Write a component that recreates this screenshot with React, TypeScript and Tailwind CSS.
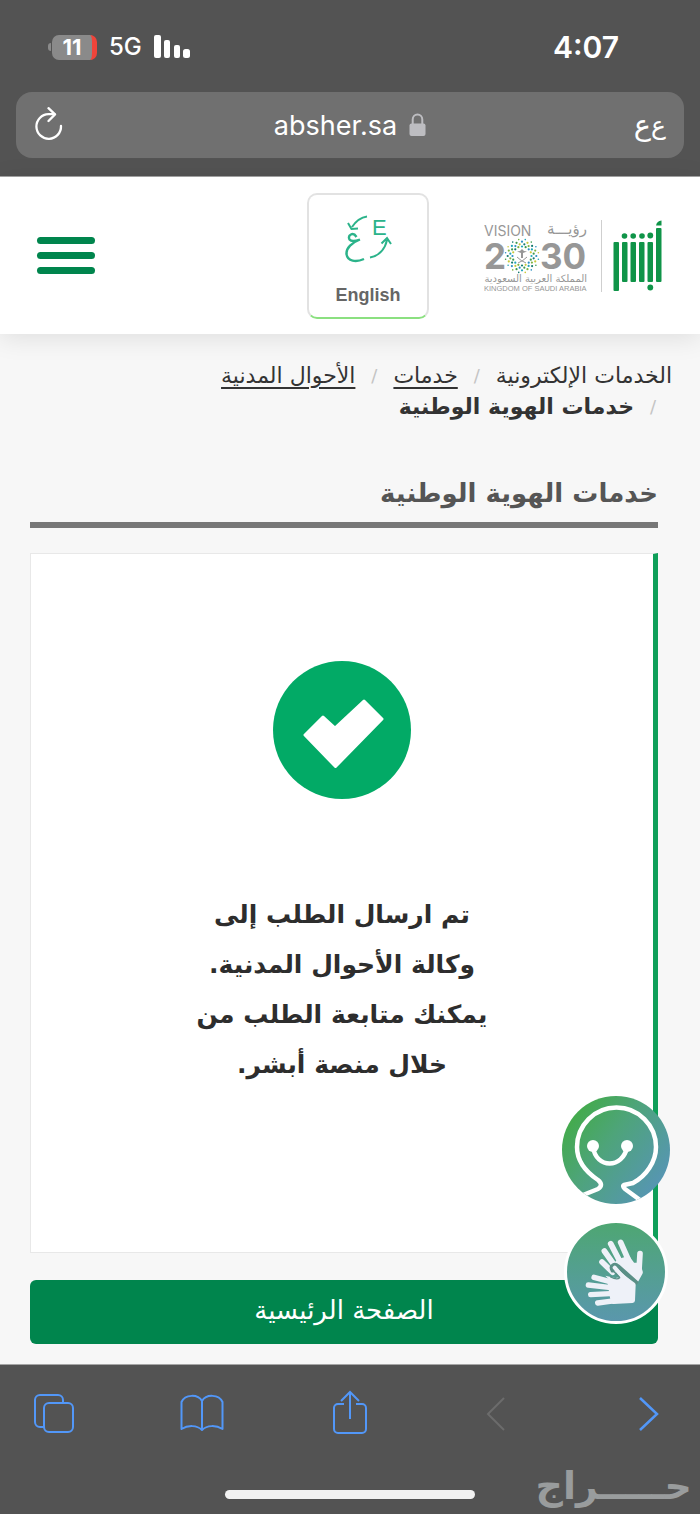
import React from "react";

const RING_COLORS = ["#1fa5b8", "#7cb342", "#157a6e", "#c9c93a", "#2a8fc4", "#3f9b4f"];

const ringDots = [0, 1, 2, 3].flatMap((ring) =>
  Array.from({ length: 16 }, (_, i) => {
    const angle = ((i + (ring % 2) * 0.5) / 16) * Math.PI * 2;
    const radius = 9.5 + ring * 2.4;
    return {
      key: `${ring}-${i}`,
      x: 38 + Math.cos(angle) * radius,
      y: 36 + Math.sin(angle) * radius,
      r: ring === 3 ? 0.8 : 1.1,
      color: RING_COLORS[(i * 5 + ring * 2) % RING_COLORS.length],
    };
  }),
);

function SignalBars() {
  return (
    <svg width="36" height="24" viewBox="0 0 36 24" fill="#fff" aria-hidden="true">
      <rect x="0" y="0" width="7" height="23" rx="2" />
      <rect x="10" y="5" width="6" height="18" rx="2" />
      <rect x="20" y="10" width="6" height="13" rx="2" />
      <rect x="29" y="14" width="7" height="9" rx="2.5" />
    </svg>
  );
}

function Battery() {
  return (
    <div className="flex items-center gap-px">
      <span className="h-2 w-[3px] rounded-l-full bg-[#8a8a8a]" />
      <span className="flex h-[25px] w-[45px] items-center justify-center overflow-hidden rounded-[7px] border-r-[5px] border-[#f0443a] bg-[#8a8a8a] text-[22px] font-bold leading-none">
        11
      </span>
    </div>
  );
}

function BrowserTop() {
  return (
    <div dir="ltr" className="h-[177px] border-b border-[#a5a5a5] bg-[#535353] px-4 pt-7 text-white font-[Inter,sans-serif]">
      <div className="flex h-[38px] items-center justify-between pl-8 pr-[65px]">
        <div className="flex items-center">
          <Battery />
          <span className="ml-3 mr-3 text-[24px] font-medium leading-none">5G</span>
          <SignalBars />
        </div>
        <time className="text-[30px] font-semibold leading-none">4:07</time>
      </div>
      <div className="mt-[26px] flex h-[66px] items-center justify-between rounded-[16px] bg-[#707070] px-[18px]">
        <button type="button" aria-label="إعادة تحميل" className="flex w-10">
          <svg width="30" height="36" viewBox="0 0 30 36" fill="none" stroke="#fff" strokeWidth="2.3" strokeLinecap="round" strokeLinejoin="round">
            <path d="M20.5 7.200 H14.5 A12.3 12.3 0 1 0 27 19" />
            <path d="M14.5 1.200 L21 7.400 L14.5 14" />
          </svg>
        </button>
        <div className="flex items-center gap-3">
          <span className="text-[27px] leading-none">absher.sa</span>
          <svg width="17" height="24" viewBox="0 0 17 24" aria-hidden="true">
            <path d="M3.7 11 V6.5 a4.8 5 0 0 1 9.6 0 V11" fill="none" stroke="#bdbdc1" strokeWidth="2" />
            <rect x="0.5" y="10.5" width="16" height="12.5" rx="2" fill="#bdbdc1" />
          </svg>
        </div>
        <button type="button" dir="rtl" className="flex w-10 items-center justify-start font-['DejaVu_Sans',sans-serif] leading-none">
          <span className="text-[25px]">ع</span>
          <span className="text-[29px]">ع</span>
        </button>
      </div>
    </div>
  );
}

function AbsherLogo() {
  return (
    <svg width="50" height="72" viewBox="0 0 50 72" role="img" aria-label="أبشر" fill="#0f9448">
      <rect x="0.5" y="22" width="5.5" height="49" rx="1" />
      <rect x="9" y="22" width="5.5" height="40" rx="1" />
      <rect x="17.5" y="22" width="5.5" height="40" rx="1" />
      <rect x="26" y="22" width="5.5" height="40" rx="1" />
      <rect x="34.5" y="22" width="5.5" height="40" rx="1" />
      <rect x="43" y="8" width="5.5" height="54" rx="1" />
      <circle cx="11.5" cy="16" r="2.8" />
      <circle cx="20.2" cy="16" r="2.8" />
      <circle cx="29" cy="16" r="2.8" />
      <circle cx="37.3" cy="15.5" r="2.9" />
      <circle cx="37.3" cy="67.5" r="2.9" />
      <path d="M43 5.5 C43.5 2.5 45.5 1 48.5 0.5 V5.5 Z" />
    </svg>
  );
}

function VisionLogo() {
  return (
    <svg width="104" height="72" viewBox="0 0 104 72" direction="ltr" fill="#979797">
      <text x="0" y="16" fontFamily="Inter, sans-serif" fontSize="14">VISION</text>
      <text x="103" y="14" textAnchor="end" fontFamily="DejaVu Sans, sans-serif" fontSize="15">رؤيـــة</text>
      <text x="0" y="49" fontFamily="Inter, sans-serif" fontSize="35" fontWeight="700">2</text>
      <text x="56" y="49" fontFamily="Inter, sans-serif" fontSize="35" fontWeight="700">30</text>
      <circle cx="38" cy="36" r="17" fill="#fff" />
      {ringDots.map((d) => (
        <circle key={d.key} cx={d.x} cy={d.y} r={d.r} fill={d.color} />
      ))}
      <path d="M38 29 l2 2 3 .5 -4 1.5 v5 h-2 v-5 l-4-1.5 3-.5 Z" />
      <path d="M33 37 q4 4 9 6 M43 37 q-4 4-9 6" fill="none" stroke="#979797" strokeWidth="1" />
      <text x="103" y="62" textAnchor="end" fontFamily="DejaVu Sans, sans-serif" fontSize="10">المملكة العربية السعودية</text>
      <text x="0" y="71" fontFamily="Liberation Sans, sans-serif" fontSize="7.5">KINGDOM OF SAUDI ARABIA</text>
    </svg>
  );
}

function LanguageIcon() {
  return (
    <svg width="52" height="50" viewBox="0 0 52 50" fill="none" stroke="#2bb38a" direction="ltr" aria-hidden="true">
      <path d="M25 1.5 C18 2.5 14 6 10 12 M6 8 L9.5 14 L16 13.5" strokeWidth="2" />
      <path d="M14.5 22 C11 16.5 5.5 20 7.5 24.5 C9.5 27 14 26 18 24.5 C10 27.5 4 33 4.5 39 C5.5 46.500 14 47.5 22 44" strokeWidth="2.4" />
      <path d="M28 42.5 C37 41 43 34 45 25 M39.500 28.500 L45 23 L49 29" strokeWidth="2" />
      <text x="30" y="20" fill="#2bb38a" stroke="none" fontFamily="Liberation Sans, sans-serif" fontSize="22">E</text>
    </svg>
  );
}

function SiteHeader() {
  return (
    <header className="relative flex h-[157px] items-center justify-between bg-white pl-[37px] pr-[37px] shadow-[0_4px_24px_rgba(0,0,0,0.1)]">
      <div className="flex items-center">
        <AbsherLogo />
        <span className="ml-[13px] mr-[11px] h-[72px] w-px bg-[#cfcfcf]" />
        <VisionLogo />
        <button
          type="button"
          className="mr-[55px] flex h-[126px] w-[122px] flex-col items-center justify-end gap-5 rounded-[10px] border-2 border-[#e2e2e2] border-b-[#8be080] bg-white pb-3"
        >
          <LanguageIcon />
          <span className="font-['Liberation_Sans',sans-serif] text-[18px] font-bold leading-5 text-[#666]">English</span>
        </button>
      </div>
      <button type="button" aria-label="القائمة" className="flex w-[58px] flex-col gap-2">
        <span className="h-[7px] rounded-full bg-[#00854d]" />
        <span className="h-[7px] rounded-full bg-[#00854d]" />
        <span className="h-[7px] rounded-full bg-[#00854d]" />
      </button>
    </header>
  );
}

function Separator() {
  return <span aria-hidden="true" className="w-[38px] shrink-0 text-center text-[18px] font-normal text-[#c4c4c4]">/</span>;
}

function Breadcrumb() {
  return (
    <nav className="px-7 pt-[26px]">
      <ol className="flex flex-wrap text-[22px] leading-[31px] text-[#333]">
        <li>الخدمات الإلكترونية</li>
        <li className="flex"><Separator /><a href="#services" className="underline underline-offset-4">خدمات</a></li>
        <li className="flex"><Separator /><a href="#civil" className="underline underline-offset-4">الأحوال المدنية</a></li>
        <li className="flex font-bold"><Separator />خدمات الهوية الوطنية</li>
      </ol>
    </nav>
  );
}

function FaceIcon() {
  return (
    <svg width="108" height="108" viewBox="0 0 108 108" fill="none" aria-hidden="true">
      <defs>
        <linearGradient id="face-fill" x1="0.1" y1="0.15" x2="0.95" y2="0.8">
          <stop offset="0" stopColor="#43ab4a" />
          <stop offset="0.4" stopColor="#4ea47a" />
          <stop offset="1" stopColor="#5795b5" />
        </linearGradient>
        <clipPath id="face-clip"><circle cx="54" cy="54" r="54" /></clipPath>
      </defs>
      <circle cx="54" cy="54" r="54" fill="url(#face-fill)" />
      <g clipPath="url(#face-clip)" stroke="#fff" strokeLinecap="round" strokeLinejoin="round">
        <path d="M21 99 L36 93 Q42 89 36 84 C24 76 15 65 15 51 A39.500 39.500 0 0 1 94 51 C94 66 84 80 71 87 L62 89 Q60 90 63 93 L78 104" strokeWidth="4.500" />
        <path d="M31 51 C34 73 61 73 65 51" strokeWidth="4.500" />
      </g>
      <circle cx="31" cy="50" r="6" fill="#fff" />
      <circle cx="65" cy="50" r="6" fill="#fff" />
    </svg>
  );
}

function HandsIcon() {
  return (
    <svg width="68" height="78" viewBox="0 0 204 234" fill="#eef1f8" stroke="#eef1f8" strokeLinecap="round" strokeLinejoin="round" aria-hidden="true">
      <g strokeWidth="17">
        <path d="M116 28 L138 78 M86 32 L114 86 M67 54 L98 98 M60 87 L92 118 M174 62 L171 112" />
        <path d="M112 86 L138 78 L152 98 L168 98 L174 118 L162 140 L118 118 L98 100 Z" />
      </g>
      <path d="M92 112 C84 98 98 92 108 100 L162 148" fill="none" stroke="#5a8f86" strokeWidth="13" />
      <path d="M70 128 L112 138 L122 124 L158 154 L156 176 L100 160 Z" stroke="none" />
      <g strokeWidth="16">
        <path d="M36 133 L84 146 M19 156 L80 163 M26 185 L84 182 M47 210 L100 203" />
        <path d="M84 146 L128 138 L153 156 L151 202 L94 205 Z" />
      </g>
      <path d="M98 104 L124 134" strokeWidth="12" />
      <path d="M92 112 L113 134 C106 141 94 136 86 132" fill="none" stroke="#5a8f86" strokeWidth="4" />
    </svg>
  );
}

function BrowserBottom() {
  return (
    <footer dir="ltr" className="relative h-[150px] border-t border-[#a5a5a5] bg-[#535353]">
      <nav className="flex items-center justify-between px-8 pt-6">
        <button type="button" aria-label="علامات التبويب" className="text-[#5297f8]">
          <svg width="44" height="50" viewBox="0 0 44 50" fill="none" stroke="currentColor" strokeWidth="2">
            <path d="M12 38 H8 a5 5 0 0 1-5-5 V11 a5 5 0 0 1 5-5 H26 a5 5 0 0 1 5 5 V14" />
            <rect x="12" y="14" width="29" height="29" rx="5" />
          </svg>
        </button>
        <button type="button" aria-label="الإشارات المرجعية" className="text-[#5297f8]">
          <svg width="44" height="50" viewBox="0 0 44 50" fill="none" stroke="currentColor" strokeWidth="2" strokeLinejoin="round">
            <path d="M22 41 C17 36 8 36 1.500 40 V13 C5 5 18 5 22 12 C26 5 39 5 42.500 13 V40 C36 36 27 36 22 41 Z M22 12 V41" />
          </svg>
        </button>
        <button type="button" aria-label="مشاركة" className="text-[#5297f8]">
          <svg width="44" height="50" viewBox="0 0 44 50" fill="none" stroke="currentColor" strokeWidth="2">
            <path d="M16 15 H10 a4 4 0 0 0-4 4 V40 a4 4 0 0 0 4 4 H34 a4 4 0 0 0 4-4 V19 a4 4 0 0 0-4-4 H28" />
            <path d="M22 30 V3 M13 12 L22 3 L31 12" />
          </svg>
        </button>
        <button type="button" aria-label="السابق" disabled className="text-[#6c6c6c]">
          <svg width="44" height="50" viewBox="0 0 44 50" fill="none" stroke="currentColor" strokeWidth="2">
            <path d="M28 9 L12 25 L28 41" />
          </svg>
        </button>
        <button type="button" aria-label="التالي" className="text-[#5297f8]">
          <svg width="44" height="50" viewBox="0 0 44 50" fill="none" stroke="currentColor" strokeWidth="2.5">
            <path d="M16 9 L33 25 L16 41" />
          </svg>
        </button>
      </nav>
      <div className="mx-auto mt-[51px] h-[9px] w-[250px] rounded-full bg-[#f2f2f2]" />
      <span dir="rtl" className="absolute bottom-1 right-2 text-[38px] font-bold leading-[48px] text-[#999c9d]">حـــــراج</span>
    </footer>
  );
}

export default function App() {
  return (
    <div dir="rtl" lang="ar" className="min-h-screen bg-[#f7f7f7] font-['DejaVu_Sans',sans-serif]">
      <BrowserTop />
      <SiteHeader />
      <Breadcrumb />
      <main className="relative pb-5 pl-[30px] pr-[42px] pt-[46px]">
        <h1 className="border-b-[6px] border-[#777] pb-1 text-[26px] font-bold leading-[50px] text-[#555]">
          خدمات الهوية الوطنية
        </h1>
        <section className="mt-[25px] flex h-[700px] flex-col items-center border border-r-[5px] border-[#e8e8e8] border-r-[#0f9f59] bg-white pt-[107px]">
          <svg width="138" height="138" viewBox="0 0 138 138" aria-hidden="true">
            <circle cx="69" cy="69" r="69" fill="#02aa66" />
            <path d="M32 74 L50 56 L62 67 L91 40 L109 58 L62.500 105.500 Z" fill="#fff" stroke="#fff" strokeWidth="3" strokeLinejoin="round" />
          </svg>
          <p className="mt-[91px] w-[320px] text-center text-[25px] font-bold leading-[50px] text-[#2d2d2d]">
            تم ارسال الطلب إلى
            <br />
            وكالة الأحوال المدنية.
            <br />
            يمكنك متابعة الطلب من
            <br />
            خلال منصة أبشر.
          </p>
        </section>
        <button type="button" className="mt-[27px] flex h-16 w-full justify-center rounded-[6px] bg-[#00854d] text-[26px] leading-[60px] text-white">
          الصفحة الرئيسية
        </button>
        <div className="absolute bottom-10 right-[30px] flex flex-col items-center gap-4">
          <button type="button" aria-label="المساعد" className="rounded-full">
            <FaceIcon />
          </button>
          <button
            type="button"
            aria-label="لغة الإشارة"
            className="flex h-[104px] w-[104px] items-center justify-center rounded-full border-[3px] border-white bg-linear-to-b from-[#4ea672] to-[#5a97ac]"
          >
            <HandsIcon />
          </button>
        </div>
      </main>
      <BrowserBottom />
    </div>
  );
}
